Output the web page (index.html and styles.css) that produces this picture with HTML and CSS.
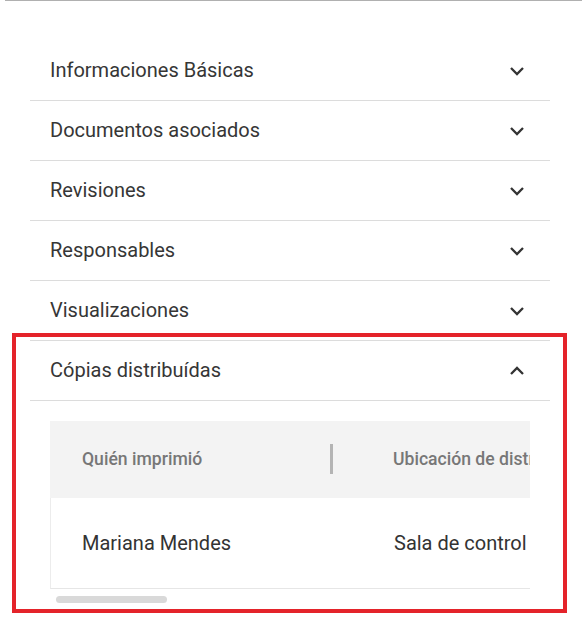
FILE: index.html
```html
<!DOCTYPE html>
<html lang="es">
<head>
<meta charset="utf-8">
<link rel="stylesheet" href="styles.css">
</head>
<body>
<div class="topline"></div>
<div class="accordion">
  <div class="item">
    <div class="item-head"><span>Informaciones Básicas</span>
      <svg class="chev" viewBox="0 0 24 24"><path d="M6 9 L12 15 L18 9"/></svg></div>
  </div>
  <div class="item">
    <div class="item-head"><span>Documentos asociados</span>
      <svg class="chev" viewBox="0 0 24 24"><path d="M6 9 L12 15 L18 9"/></svg></div>
  </div>
  <div class="item">
    <div class="item-head"><span>Revisiones</span>
      <svg class="chev" viewBox="0 0 24 24"><path d="M6 9 L12 15 L18 9"/></svg></div>
  </div>
  <div class="item">
    <div class="item-head"><span>Responsables</span>
      <svg class="chev" viewBox="0 0 24 24"><path d="M6 9 L12 15 L18 9"/></svg></div>
  </div>
  <div class="item">
    <div class="item-head"><span>Visualizaciones</span>
      <svg class="chev" viewBox="0 0 24 24"><path d="M6 9 L12 15 L18 9"/></svg></div>
  </div>
  <div class="item item-open highlight">
    <div class="item-head"><span>Cópias distribuídas</span>
      <svg class="chev" viewBox="0 0 24 24"><path d="M6 15 L12 9 L18 15"/></svg></div>
    <div class="panel">
      <div class="table-wrap">
        <div class="table">
          <div class="thead">
            <div class="cell col1"><span>Quién imprimió</span><i class="sep"></i></div>
            <div class="cell col2"><span>Ubicación de distribución</span></div>
          </div>
          <div class="trow">
            <div class="cell col1"><span>Mariana Mendes</span></div>
            <div class="cell col2"><span>Sala de control</span></div>
          </div>
        </div>
      </div>
      <div class="scrollbar"><div class="thumb"></div></div>
    </div>
  </div>
</div>
</body>
</html>
```
FILE: styles.css
```css
html, body {
  margin: 0;
  padding: 0;
  background: #fff;
}
body {
  font-family: Roboto, "Liberation Sans", Arial, sans-serif;
  color: #333;
  width: 582px;
  height: 632px;
  overflow: hidden;
}
.topline {
  height: 1px;
  background: #b0b0b0;
  margin-left: 5px;
}
.accordion {
  padding: 40px 32px 0 30px;
}
.item-head {
  box-sizing: border-box;
  height: 60px;
  border-bottom: 1px solid #dcdcdc;
  display: flex;
  align-items: center;
  justify-content: space-between;
  padding: 0 21px 0 20px;
  font-size: 20px;
  color: #363636;
}
.item-head span {
  margin-top: -1px;
}
.chev {
  width: 24px;
  height: 24px;
  fill: none;
  stroke: #333;
  stroke-width: 2.3;
}
.highlight {
  position: relative;
}
.highlight::after {
  content: "";
  position: absolute;
  left: -18px;
  right: -17px;
  top: -8px;
  bottom: -8px;
  border: 4px solid #e4232a;
  pointer-events: none;
}
.panel {
  padding: 20px 20px 2px 20px;
}
.table-wrap {
  overflow: hidden;
}
.table {
  width: 700px;
}
.thead {
  display: flex;
  height: 77px;
  background: #f3f3f3;
  font-size: 17.6px;
  font-weight: 500;
  color: #777;
}
.thead .cell span {
  margin-top: -2px;
}
.trow {
  display: flex;
  height: 91px;
  box-sizing: border-box;
  border-left: 1px solid #ececec;
  border-bottom: 1px solid #e6e6e6;
  font-size: 20px;
  color: #333;
}
.cell {
  box-sizing: border-box;
  display: flex;
  align-items: center;
  padding-left: 32px;
  white-space: nowrap;
}
.trow .col1 {
  padding-left: 31px;
}
.col1 {
  width: 311px;
  justify-content: space-between;
  padding-right: 28px;
}
.col2 {
  flex: 1;
}
.sep {
  display: block;
  width: 3px;
  height: 30px;
  background: #b4b4b4;
  margin-top: -2px;
}
.scrollbar {
  margin-top: 7px;
  height: 7px;
  padding-left: 6px;
}
.thumb {
  width: 111px;
  height: 7px;
  border-radius: 4px;
  background: #d9d9d9;
}
```
